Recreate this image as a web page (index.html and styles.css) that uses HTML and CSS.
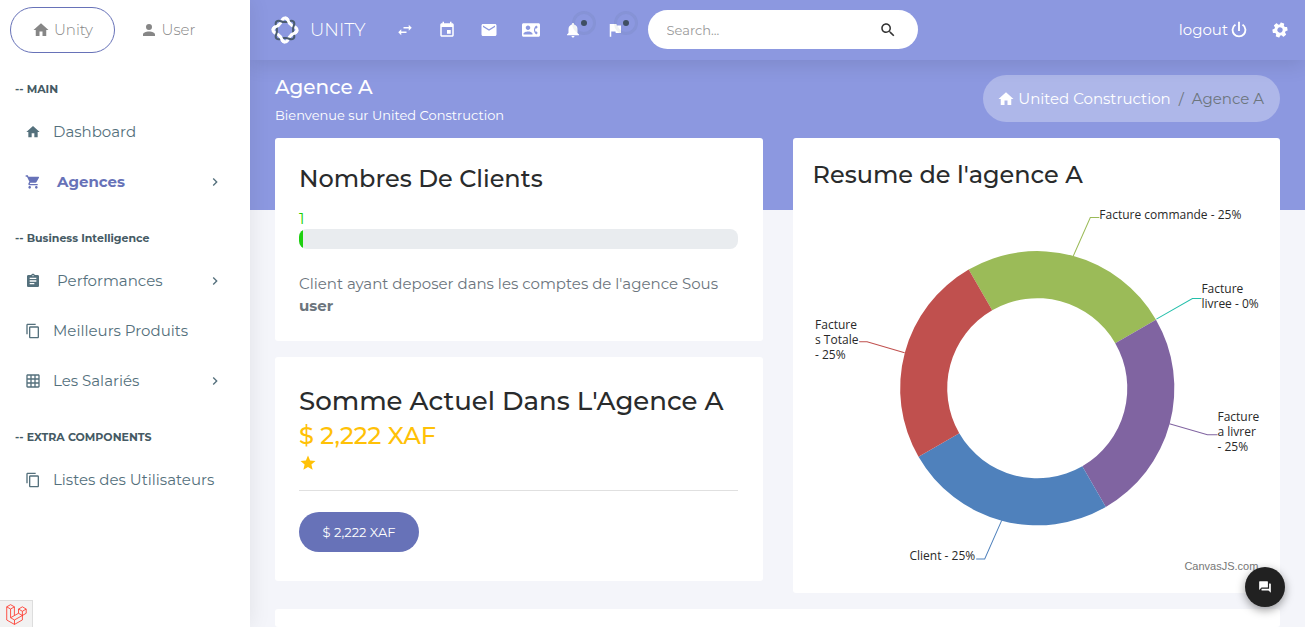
FILE: index.html
```html
<!DOCTYPE html>
<html lang="fr">
<head>
<meta charset="utf-8">
<meta name="viewport" content="width=device-width, initial-scale=1">
<title>Agence A - Unity</title>
<link rel="stylesheet" href="styles.css">
</head>
<body>
<svg class="sprite" aria-hidden="true">
  <symbol id="home" viewBox="0 0 24 24"><path d="M10 20v-6h4v6h5v-8h3L12 3 2 12h3v8z"/></symbol>
  <symbol id="account" viewBox="0 0 24 24"><path d="M12 4a4 4 0 1 1 0 8 4 4 0 0 1 0-8m0 10c4.42 0 8 1.79 8 4v2H4v-2c0-2.21 3.58-4 8-4z"/></symbol>
  <symbol id="cart" viewBox="0 0 24 24"><path d="M7 18c-1.1 0-1.99.9-1.99 2S5.9 22 7 22s2-.9 2-2-.9-2-2-2zM1 2v2h2l3.6 7.59-1.35 2.45c-.16.28-.25.61-.25.96 0 1.1.9 2 2 2h12v-2H7.42c-.14 0-.25-.11-.25-.25l.03-.12.9-1.63h7.45c.75 0 1.41-.41 1.75-1.03l3.58-6.49A1 1 0 0 0 20 4H5.21l-.94-2H1zm16 16c-1.1 0-1.99.9-1.99 2s.89 2 1.99 2 2-.9 2-2-.9-2-2-2z"/></symbol>
  <symbol id="task" viewBox="0 0 24 24"><path d="M19 3h-4.18C14.4 1.84 13.3 1 12 1c-1.3 0-2.4.84-2.82 2H5c-1.1 0-2 .9-2 2v14c0 1.1.9 2 2 2h14c1.1 0 2-.9 2-2V5c0-1.1-.9-2-2-2zm-7 0c.55 0 1 .45 1 1s-.45 1-1 1-1-.45-1-1 .45-1 1-1zm2 14H7v-2h7v2zm3-4H7v-2h10v2zm0-4H7V7h10v2z"/></symbol>
  <symbol id="copy" viewBox="0 0 24 24"><path d="M16 1H4c-1.1 0-2 .9-2 2v14h2V3h12V1zm3 4H8c-1.1 0-2 .9-2 2v14c0 1.1.9 2 2 2h11c1.1 0 2-.9 2-2V7c0-1.1-.9-2-2-2zm0 16H8V7h11v14z"/></symbol>
  <symbol id="grid" viewBox="0 0 24 24"><path d="M20 2H4c-1.1 0-2 .9-2 2v16c0 1.1.9 2 2 2h16c1.1 0 2-.9 2-2V4c0-1.1-.9-2-2-2zM8 20H4v-4h4v4zm0-6H4v-4h4v4zm0-6H4V4h4v4zm6 12h-4v-4h4v4zm0-6h-4v-4h4v4zm0-6h-4V4h4v4zm6 12h-4v-4h4v4zm0-6h-4v-4h4v4zm0-6h-4V4h4v4z"/></symbol>
  <symbol id="chevron" viewBox="0 0 24 24"><path d="M8.59 16.58 13.17 12 8.59 7.41 10 6l6 6-6 6z"/></symbol>
  <symbol id="swap" viewBox="0 0 24 24"><path d="m21 9-4-4v3h-7v2h7v3M7 11l-4 4 4 4v-3h7v-2H7z"/></symbol>
  <symbol id="event" viewBox="0 0 24 24"><path d="M17 12h-5v5h5v-5zM16 1v2H8V1H6v2H5c-1.11 0-1.99.9-1.99 2L3 19c0 1.1.89 2 2 2h14c1.1 0 2-.9 2-2V5c0-1.1-.9-2-2-2h-1V1h-2zm3 18H5V8h14v11z"/></symbol>
  <symbol id="mail" viewBox="0 0 24 24"><path d="M20 4H4c-1.1 0-1.99.9-1.99 2L2 18c0 1.1.9 2 2 2h16c1.1 0 2-.9 2-2V6c0-1.1-.9-2-2-2zm0 4l-8 5-8-5V6l8 5 8-5v2z"/></symbol>
  <symbol id="contact" viewBox="0 0 24 24"><path d="M22 3H2C.9 3 0 3.9 0 5v14c0 1.1.9 2 2 2h20c1.1 0 1.99-.9 1.99-2L24 5c0-1.1-.9-2-2-2zM8 6c1.66 0 3 1.34 3 3s-1.34 3-3 3-3-1.34-3-3 1.34-3 3-3zm6 12H2v-1c0-2 4-3.1 6-3.1s6 1.1 6 3.1v1zm3.85-4h1.64L21 16l-1.99 1.99c-1.31-.98-2.28-2.38-2.73-3.99-.18-.64-.28-1.31-.28-2s.1-1.36.28-2c.45-1.62 1.42-3.01 2.73-3.99L21 8l-1.51 2h-1.64c-.22.63-.35 1.3-.35 2s.13 1.37.35 2z"/></symbol>
  <symbol id="bell" viewBox="0 0 24 24"><path d="M12 22c1.1 0 2-.9 2-2h-4c0 1.1.89 2 2 2zm6-6v-5c0-3.07-1.64-5.64-4.5-6.32V4c0-.83-.67-1.5-1.5-1.5s-1.5.67-1.5 1.5v.68C7.63 5.36 6 7.92 6 11v5l-2 2v1h16v-1l-2-2z"/></symbol>
  <symbol id="flag" viewBox="0 0 24 24"><path d="M14.4 6L14 4H5v17h2v-7h5.6l.4 2h7V6z"/></symbol>
  <symbol id="search" viewBox="0 0 24 24"><path d="M15.5 14h-.79l-.28-.27C15.41 12.59 16 11.11 16 9.5 16 5.91 13.09 3 9.5 3S3 5.91 3 9.5 5.91 16 9.5 16c1.61 0 3.09-.59 4.23-1.57l.27.28v.79l5 4.99L20.49 19l-4.99-5zm-6 0C7.01 14 5 11.99 5 9.5S7.01 5 9.5 5 14 7.01 14 9.5 11.99 14 9.5 14z"/></symbol>
  <symbol id="power" viewBox="0 0 24 24"><path d="m16.56 5.44-1.45 1.45A6 6 0 1 1 8.88 6.88L7.44 5.44a8 8 0 1 0 9.12 0M13 3h-2v10h2"/></symbol>
  <symbol id="gear" viewBox="0 0 24 24"><path transform="rotate(20 12 12)" d="M12,15.5A3.5,3.5 0 0,1 8.5,12A3.5,3.5 0 0,1 12,8.5A3.5,3.5 0 0,1 15.5,12A3.5,3.5 0 0,1 12,15.5M19.43,12.97C19.47,12.65 19.5,12.33 19.5,12C19.5,11.67 19.47,11.34 19.43,11L21.54,9.37C21.73,9.22 21.78,8.95 21.66,8.73L19.66,5.27C19.54,5.05 19.27,4.96 19.05,5.05L16.56,6.05C16.04,5.66 15.5,5.32 14.87,5.07L14.5,2.42C14.46,2.18 14.25,2 14,2H10C9.75,2 9.54,2.18 9.5,2.42L9.13,5.07C8.5,5.32 7.96,5.66 7.44,6.05L4.95,5.05C4.73,4.96 4.46,5.05 4.34,5.27L2.34,8.73C2.21,8.95 2.27,9.22 2.46,9.37L4.57,11C4.53,11.34 4.5,11.67 4.5,12C4.5,12.33 4.53,12.65 4.57,12.97L2.46,14.63C2.27,14.78 2.21,15.05 2.34,15.27L4.34,18.73C4.46,18.95 4.73,19.03 4.95,18.95L7.44,17.94C7.96,18.34 8.5,18.68 9.13,18.93L9.5,21.58C9.54,21.82 9.75,22 10,22H14C14.25,22 14.46,21.82 14.5,21.58L14.87,18.93C15.5,18.67 16.04,18.34 16.56,17.94L19.05,18.95C19.27,19.03 19.54,18.95 19.66,18.73L21.66,15.27C21.78,15.05 21.73,14.78 21.54,14.63L19.43,12.97Z"/></symbol>
  <symbol id="star" viewBox="0 0 24 24"><path d="M12 17.27L18.18 21l-1.64-7.03L22 9.24l-7.19-.61L12 2 9.19 8.63 2 9.24l5.46 4.73L5.82 21z"/></symbol>
  <symbol id="forum" viewBox="0 0 24 24"><path d="M21 6h-2v9H6v2c0 .55.45 1 1 1h11l4 4V7c0-.55-.45-1-1-1zm-4 6V3c0-.55-.45-1-1-1H3c-.55 0-1 .45-1 1v14l4-4h10c.55 0 1-.45 1-1z"/></symbol>
</svg>

<div class="app">
  <aside class="sidebar">
    <div class="tabs">
      <a class="tab tab-active" href="#unity"><svg class="icon icon-large"><use href="#home"/></svg>Unity</a>
      <a class="tab" href="#user"><svg class="icon icon-large"><use href="#account"/></svg>User</a>
    </div>
    <nav class="menu">
      <h2 class="menu-title">-- MAIN</h2>
      <a class="menu-link" href="#dashboard"><svg class="icon"><use href="#home"/></svg>Dashboard</a>
      <a class="menu-link menu-wide menu-current" href="#agences"><svg class="icon"><use href="#cart"/></svg>Agences<svg class="icon arrow"><use href="#chevron"/></svg></a>
      <h2 class="menu-title">-- Business Intelligence</h2>
      <a class="menu-link menu-wide" href="#performances"><svg class="icon"><use href="#task"/></svg>Performances<svg class="icon arrow"><use href="#chevron"/></svg></a>
      <a class="menu-link" href="#produits"><svg class="icon"><use href="#copy"/></svg>Meilleurs Produits</a>
      <a class="menu-link" href="#salaries"><svg class="icon"><use href="#grid"/></svg>Les Salariés<svg class="icon arrow"><use href="#chevron"/></svg></a>
      <h2 class="menu-title">-- EXTRA COMPONENTS</h2>
      <a class="menu-link" href="#utilisateurs"><svg class="icon"><use href="#copy"/></svg>Listes des Utilisateurs</a>
    </nav>
  </aside>

  <div class="page">
    <header class="topbar">
      <a class="brand" href="#home-page">
        <svg class="logo" viewBox="0 0 28 28" aria-hidden="true">
          <defs><path id="wave" pathLength="8" d="M14 2C18 2 16.5 6.5 19.7 8.3C21.5 11.5 26 10 26 14C26 18 21.5 16.5 19.7 19.7C16.5 21.5 18 26 14 26C10 26 11.5 21.5 8.3 19.7C6.5 16.5 2 18 2 14C2 10 6.5 11.5 8.3 8.3C11.5 6.5 10 2 14 2Z"/></defs>
          <use href="#wave" class="wave-light"/>
          <use href="#wave" class="wave-dark" transform="rotate(45 14 14)"/>
          <use href="#wave" class="wave-light wave-over"/>
        </svg>
        UNITY
      </a>
      <div class="tools">
        <button class="tool" type="button" aria-label="Menu"><svg class="icon"><use href="#swap"/></svg></button>
        <button class="tool" type="button" aria-label="Calendrier"><svg class="icon"><use href="#event"/></svg></button>
        <button class="tool" type="button" aria-label="Messages"><svg class="icon"><use href="#mail"/></svg></button>
        <button class="tool" type="button" aria-label="Contacts"><svg class="icon"><use href="#contact"/></svg></button>
        <button class="tool" type="button" aria-label="Notifications"><svg class="icon"><use href="#bell"/></svg><span class="pulse"></span></button>
        <button class="tool" type="button" aria-label="Alertes"><svg class="icon"><use href="#flag"/></svg><span class="pulse"></span></button>
      </div>
      <form class="search">
        <input class="search-input" type="text" placeholder="Search..." aria-label="Search">
        <button class="search-button" type="submit" aria-label="Search"><svg class="icon icon-large"><use href="#search"/></svg></button>
      </form>
      <div class="session">
        <a class="logout" href="#logout">logout<svg class="icon"><use href="#power"/></svg></a>
        <button class="tool settings" type="button" aria-label="Settings"><svg class="icon"><use href="#gear"/></svg></button>
      </div>
    </header>

    <main class="content">
      <div class="heading">
        <div>
          <h1 class="title">Agence A</h1>
          <p class="subtitle">Bienvenue sur United Construction</p>
        </div>
        <nav class="crumbs" aria-label="Fil d'Ariane">
          <a class="crumb" href="#construction"><svg class="icon icon-large"><use href="#home"/></svg>United Construction</a>
          <span class="crumb-here">/</span>
          <span class="crumb-here">Agence A</span>
        </nav>
      </div>

      <div class="columns">
        <div class="stack">
          <section class="card card-clients">
            <h2 class="card-title">Nombres De Clients</h2>
            <div class="count">1</div>
            <div class="bar"><div class="bar-fill" style="width:1%"></div></div>
            <p class="note">Client ayant deposer dans les comptes de l'agence Sous <strong>user</strong></p>
          </section>
          <section class="card card-sum">
            <h2 class="card-title card-title-large">Somme Actuel Dans L'Agence A</h2>
            <div class="amount">$ 2,222 XAF</div>
            <svg class="icon icon-large star"><use href="#star"/></svg>
            <hr class="rule">
            <button class="pill" type="button">$ 2,222 XAF</button>
          </section>
        </div>
        <section class="card card-chart">
          <h2 class="card-title">Resume de l'agence A</h2>
          <svg class="chart" viewBox="0 0 447 383" role="img" aria-label="Resume de l'agence A">
            <g transform="translate(224 193)">
              <path fill="#9bbb58" d="M-68.5-118.6A137 137 0 0 1 118.6-68.5L77.9-45A90 90 0 0 0-45-77.9Z"/>
              <path fill="#8064a1" d="M118.6-68.5A137 137 0 0 1 68.5 118.6L45 77.9A90 90 0 0 0 77.9-45Z"/>
              <path fill="#4f81bc" d="M68.5 118.6A137 137 0 0 1-118.6 68.5L-77.9 45A90 90 0 0 0 45 77.9Z"/>
              <path fill="#c0504e" d="M-118.6 68.5A137 137 0 0 1-68.5-118.6L-45-77.9A90 90 0 0 0-77.9 45Z"/>
              <g class="leads">
                <path stroke="#9bbb58" d="M36-132 53-170.5H62"/>
                <path stroke="#23bfaa" d="M119-69 155-89.5H164"/>
                <path stroke="#8064a1" d="M132 35.5 170 46.5H180"/>
                <path stroke="#4f81bc" d="M-35.5 132-52.5 170.5H-61"/>
                <path stroke="#c0504e" d="M-132.5-35.5-170-46.5H-178"/>
              </g>
              <g class="labels">
                <text x="62" y="-169">Facture commande - 25%</text>
                <text x="164" y="-95">Facture</text>
                <text x="164" y="-80">livree - 0%</text>
                <text x="180" y="33">Facture</text>
                <text x="180" y="48">a livrer</text>
                <text x="180" y="63">- 25%</text>
                <text x="-62" y="172" text-anchor="end">Client - 25%</text>
                <text x="-222" y="-59">Facture</text>
                <text x="-222" y="-44">s Totale</text>
                <text x="-222" y="-29">- 25%</text>
              </g>
              <a href="#canvasjs"><text class="credit" x="147" y="182">CanvasJS.com</text></a>
            </g>
          </svg>
        </section>
      </div>
      <section class="card card-next"></section>
    </main>
  </div>
</div>

<button class="chat" type="button" aria-label="Chat"><svg class="icon"><use href="#forum"/></svg></button>
<button class="debug" type="button" aria-label="Debug">
  <svg class="debug-logo" viewBox="-1 2 52 52" aria-hidden="true"><path d="M.8 9 10.3 3.6 19.8 9 10.3 14.5ZM30 14.5 39.6 9 49 14.5 39.6 20ZM.8 9V41.6L20 52.6 39.6 41.4V20M49 14.5V25L20 41.6V52.6M10.3 14.5V36L20 41.6M19.8 9V30.7L10.3 36M30 14.5V25L39.6 30.5M19.8 30.7 30 25"/></svg>
</button>
</body>
</html>
```

FILE: styles.css
```css
* { box-sizing: border-box; }
body {
  margin: 0;
  height: 100vh;
  overflow: hidden;
  font-family: Montserrat, Inter, "Open Sans", sans-serif;
  font-size: 15px;
  font-weight: 400;
  line-height: 22px;
  color: #292b2c;
}
h1, h2, p { margin: 0; }
a { color: inherit; text-decoration: none; }
button { padding: 0; border: 0; background: none; color: inherit; font: inherit; cursor: pointer; }
.sprite { position: absolute; width: 0; height: 0; }
.icon { flex: none; width: 16px; height: 16px; fill: currentColor; }
.icon-large { width: 18px; height: 18px; }
.app { display: flex; height: 100%; }

/* Sidebar */
.sidebar {
  position: relative;
  z-index: 3;
  flex: none;
  width: 250px;
  background: #fff;
  box-shadow: 1px 0 20px rgba(0, 0, 0, .08);
}
.tabs { display: flex; height: 58px; padding: 7px 10px 5px; font-weight: 300; color: #868686; }
.tab {
  display: flex;
  align-items: center;
  justify-content: center;
  gap: 4px;
  width: 105px;
  border: 1px solid transparent;
  border-radius: 24px;
}
.tab-active { border-color: #6772b8; }
.menu { color: #54707c; }
.menu-title {
  padding: 22px 15px 9px;
  font-size: 11px;
  font-weight: 700;
  line-height: 18px;
  color: #455a64;
}
.menu-link { display: flex; align-items: center; gap: 12px; height: 50px; padding: 0 27px 0 25px; }
.menu-wide { gap: 16px; }
.menu-current { font-weight: 700; color: #6772b8; }
.arrow { margin-left: auto; color: #54707c; }

/* Top bar */
.page { display: flex; flex: 1; flex-direction: column; min-width: 0; }
.topbar {
  position: relative;
  z-index: 2;
  display: flex;
  flex: none;
  align-items: center;
  height: 60px;
  padding: 0 15px 1px 21px;
  background: #8c98e0;
  color: #fff;
  box-shadow: 0 5px 20px rgba(0, 0, 0, .1);
}
.brand { display: flex; align-items: center; gap: 11px; font-size: 18px; font-weight: 300; }
.logo { width: 28px; height: 28px; }
.wave-light, .wave-dark { fill: none; stroke-width: 3; }
.wave-light { stroke: #fff; }
.wave-dark { stroke: #4a5c70; stroke-width: 2; }
.wave-over { stroke-dasharray: 1 1; }
.tools { display: flex; margin-left: 18px; }
.tool { position: relative; display: grid; place-items: center; width: 42px; height: 40px; }
.tool .icon { width: 18px; height: 18px; }
.pulse {
  position: absolute;
  top: 1px;
  right: -2px;
  display: grid;
  place-items: center;
  width: 24px;
  height: 24px;
  border: 3px solid rgba(69, 90, 100, .08);
  border-radius: 50%;
}
.pulse::after { content: ""; width: 6px; height: 6px; border-radius: 50%; background: #3f4f63; }
.search {
  display: flex;
  align-items: center;
  width: 270px;
  height: 39px;
  margin-left: 12px;
  padding: 0 20px 0 19px;
  border-radius: 20px;
  background: #fff;
}
.search-input { flex: 1; min-width: 0; border: 0; outline: 0; padding: 0; background: none; font: inherit; font-size: 13px; color: #495057; }
.search-input::placeholder { color: #999; opacity: 1; }
.search-button { display: grid; place-items: center; width: 20px; height: 20px; color: #333; }
.session { display: flex; align-items: center; gap: 20px; margin-left: auto; }
.logout { display: flex; align-items: center; }
.logout .icon { width: 22px; height: 22px; }
.settings { width: 20px; }

/* Page body */
.content {
  display: flex;
  flex: 1;
  flex-direction: column;
  gap: 16px;
  padding: 15px 25px 0;
  background: #f4f5fa linear-gradient(#8c98e0, #8c98e0) 0 0 / 100% 150px no-repeat;
}
.heading { display: flex; align-items: flex-start; justify-content: space-between; color: #fff; }
.title { font-size: 20px; font-weight: 500; line-height: 24px; }
.subtitle { margin-top: 9px; font-size: 13px; line-height: 14px; }
.crumbs {
  display: flex;
  align-items: center;
  gap: 8px;
  height: 47px;
  padding: 0 16px 0 14px;
  border-radius: 24px;
  background: rgba(255, 255, 255, .3);
}
.crumb { display: flex; align-items: center; gap: 3px; }
.crumb-here { color: #6c757d; }
.columns { display: grid; grid-template-columns: 1fr 1fr; align-items: start; gap: 30px; }
.stack { display: grid; gap: 16px; }
.card { border-radius: 3px; background: #fff; }
.card-clients { padding: 24px 25px 24px 24px; }
.card-title { font-size: 24px; font-weight: 500; line-height: 34px; }
.count { margin-top: 14px; padding-bottom: 1px; color: #1ad000; line-height: 18px; }
.bar { height: 20px; overflow: hidden; border-radius: 8px; background: #e9ecef; }
.bar-fill { height: 100%; background: #1dd00f; }
.note { margin-top: 24px; color: #6c757d; }
.note strong { font-weight: 700; }
.card-sum { padding: 27px 25px 29px 24px; }
.card-title-large { font-size: 26px; }
.amount { font-size: 24px; font-weight: 500; line-height: 36px; color: #ffc107; }
.star { display: block; color: #ffc107; }
.rule { height: 1px; margin: 18px 0 21px; border: 0; background: #e0e0e0; }
.pill { width: 120px; height: 40px; border-radius: 20px; background: #6772b8; color: #fff; font-size: 13px; }
.card-chart { padding: 20px 20px 15px; }
.chart { display: block; width: 100%; margin-top: 3px; }
.leads { fill: none; stroke-width: 1; }
.labels { font: 400 12px "Trebuchet MS", "Open Sans", "Noto Sans", sans-serif; fill: #292929; }
.credit { font: 400 11px "Liberation Sans", Arial, sans-serif; fill: #777; }
.card-next { flex: 1; }

/* Floating controls */
.chat {
  position: fixed;
  z-index: 4;
  right: 20px;
  bottom: 20px;
  display: grid;
  place-items: center;
  width: 40px;
  height: 40px;
  border-radius: 50%;
  background: #212121;
  color: #fff;
  box-shadow: 0 3px 10px rgba(0, 0, 0, .4);
}
.chat .icon { width: 14px; height: 14px; }
.debug {
  position: fixed;
  z-index: 5;
  left: 0;
  bottom: 0;
  display: grid;
  place-items: center;
  width: 33px;
  height: 27px;
  border: 1px solid #ddd;
  border-width: 1px 1px 0 0;
  background: #f2f2f2;
}
.debug-logo { width: 21px; height: 21px; fill: none; stroke: #ff2d20; stroke-width: 2; }
```
